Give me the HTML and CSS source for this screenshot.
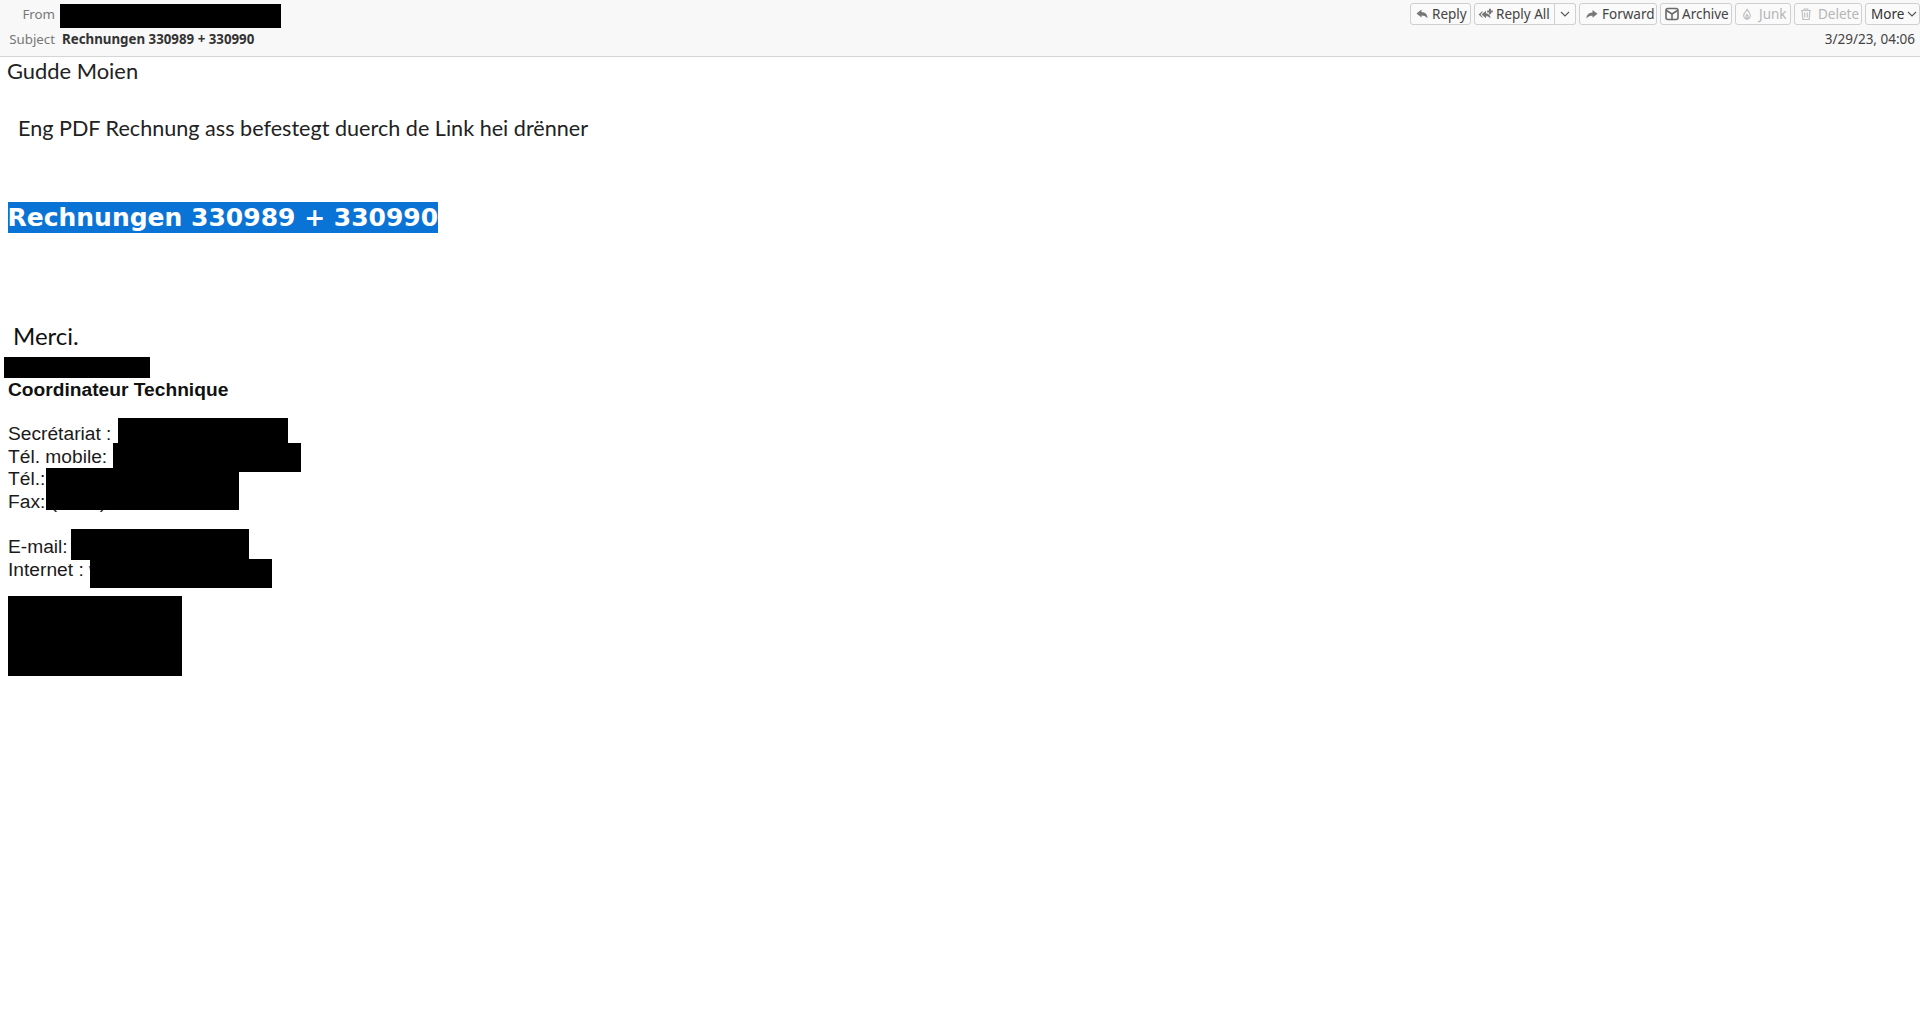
FILE: index.html
```html
<!DOCTYPE html>
<html lang="en">
<head>
<meta charset="utf-8">
<title>Rechnungen 330989 + 330990</title>
<link rel="stylesheet" href="styles.css">
</head>
<body>
<header class="head">
  <div class="head-row first">
    <div class="field"><span class="label">From</span><span class="redact from-box"></span></div>
    <div class="toolbar">
      <button class="btn reply"><svg class="ico" viewBox="0 0 12 12"><path d="M5.500 1.500.5 5.500l5 4V7.400c2.300 0 4 .6 6 2.900 0-3.800-2.200-6-6-6.200z"/></svg>Reply</button>
      <div class="split">
        <button class="btn inner replyall"><svg class="ico wide" viewBox="0 0 16 12"><path d="M4.500 3 .5 6.500l4 3.500V8.900L2.600 6.500 4.500 4.200z"/><path d="M8 2.800 3.500 6.500 8 10.300V8.200c1.800 0 3.300.5 4.500 2.300 0-3.100-1.700-4.900-4.500-5.200z"/><path d="M11 .8h2v1.700h1.800v1.900H13v1.800h-2V4.400H9.200V2.500H11z"/></svg>Reply All</button>
        <button class="btn inner caret"><svg class="chev" viewBox="0 0 10 6"><path d="M1 1l4 4 4-4"/></svg></button>
      </div>
      <button class="btn forward"><svg class="ico" viewBox="0 0 12 12"><path d="M6.500 2l5 3.800-5 3.900V7.800c-2.300 0-4 .5-6 2.700 0-3.700 2.200-5.800 6-6z"/></svg>Forward</button>
      <button class="btn archive"><svg class="ico box" viewBox="0 0 14 14"><rect class="line" x="1" y="1.500" width="12" height="11" rx="2"/><path class="line" d="M1.500 3.500 7 7l5.500-3.500M7 7v5.500"/></svg>Archive</button>
      <button class="btn junk off"><svg class="ico" viewBox="0 0 12 12"><path class="line" d="M6 .8c.3 2.200-3.300 3.700-3.300 6.800 0 2 1.500 3.600 3.300 3.600s3.300-1.600 3.300-3.600C9.300 5.600 7.800 5 7.700 3.300 6.900 3.800 6.500 2 6 .8zM6 6c.2 1-1.200 1.600-1.200 2.800 0 .8.500 1.400 1.200 1.400s1.300-.6 1.300-1.400C7.300 7.600 6.300 7.200 6 6z"/></svg>Junk</button>
      <button class="btn delete off"><svg class="ico" viewBox="0 0 12 12"><path class="line" d="M1 2.500h10M4.200 2.500V1h3.600v1.500M2.200 2.500l.6 9h6.400l.6-9M4.700 4.500v5M7.300 4.500v5"/></svg>Delete</button>
      <button class="btn more">More<svg class="chev" viewBox="0 0 10 6"><path d="M1 1l4 4 4-4"/></svg></button>
    </div>
  </div>
  <div class="head-row second">
    <div class="field"><span class="label">Subject</span><span class="subject">Rechnungen 330989 + 330990</span></div>
    <span class="date">3/29/23, 04:06</span>
  </div>
</header>
<main class="mail">
  <p class="lato greet">Gudde Moien</p>
  <p class="lato intro">Eng PDF Rechnung ass befestegt duerch de Link hei drënner</p>
  <h1 class="link-title"><span class="sel">Rechnungen 330989 + 330990</span></h1>
  <p class="lato merci">Merci.</p>
  <div class="redact name-box"></div>
  <div class="sig">
    <p class="role">Coordinateur Technique</p>
    <div class="sig-block">
      <div class="sig-line">Secrétariat :<span class="redact over r1"></span></div>
      <div class="sig-line">Tél. mobile:<span class="redact over r2"></span></div>
      <div class="sig-line">Tél.:<span class="redact over r3"></span></div>
      <div class="sig-line">Fax: (&nbsp;&nbsp;&nbsp;&nbsp;&nbsp;&nbsp;&nbsp;&nbsp;)</div>
    </div>
    <div class="sig-block second-block">
      <div class="sig-line">E-mail:<span class="redact over r4"></span></div>
      <div class="sig-line">Internet : <span class="web">www</span><span class="redact over r5"></span></div>
    </div>
    <div class="redact logo-box"></div>
  </div>
</main>
</body>
</html>
```
FILE: styles.css
```css
* { box-sizing: border-box; }
html, body { margin: 0; height: 100%; background: #fff; }
body { font-family: "Noto Sans", sans-serif; color: #222; overflow: hidden; }
p, h1 { margin: 0; }

.head { height: 57px; background: #f8f8f8; border-bottom: 1px solid #d5d5d5; padding: 3px 0 0; display: flex; flex-direction: column; }
.head-row { display: flex; justify-content: space-between; }
.head-row.first { height: 22px; align-items: flex-start; }
.head-row.second { height: 28px; padding-right: 5px; align-items: center; }
.field { display: flex; align-items: center; font-size: 13.3px; height: 22px; }
.label { width: 55px; text-align: right; color: #777; }
.from-box { width: 221px; height: 24px; margin-left: 5px; align-self: flex-start; margin-top: 1px; }
.subject { margin-left: 7px; font-weight: 700; font-size: 13.3px; color: #333; }
.date { font-size: 13.5px; color: #444; }

.toolbar { display: flex; gap: 3px; }
.btn { height: 22px; display: flex; align-items: center; padding: 0 2px 0 5px; font: 13.5px "Noto Sans", sans-serif; color: #444; background: #fafafa; border: 1px solid #d0d0d0; border-radius: 3px; white-space: nowrap; }
.reply { width: 61px; gap: 4px; }
.split { display: flex; width: 102px; }
.inner.replyall { width: 81px; border-radius: 3px 0 0 3px; padding-left: 3px; gap: 2px; }
.inner.caret { width: 21px; border-left: 0; border-radius: 0 3px 3px 0; justify-content: center; padding: 0; }
.forward { width: 78px; gap: 4px; padding-left: 6px; }
.archive { width: 72px; padding-left: 4px; gap: 3px; }
.junk { width: 56px; gap: 6px; }
.delete { width: 68px; gap: 6px; }
.more { width: 55px; justify-content: space-between; color: #333; }
.off { color: #b5b5b5; }
.ico { width: 12px; height: 12px; fill: #777; flex: none; }
.ico.wide { width: 16px; }
.ico.box { width: 14px; height: 14px; }
.ico .line { fill: none; stroke: #6a6a6a; stroke-width: 1.600; }
.off .ico .line { stroke: #c0c0c0; stroke-width: 1.200; }
.chev { width: 10px; height: 6px; fill: none; stroke: #555; stroke-width: 1.100; flex: none; }

.redact { background: #000; display: block; }
.mail { padding: 0 0 0 8px; }
.lato { font-family: Lato, sans-serif; color: #222; }
.greet { font-size: 21.900px; line-height: 30px; margin: -1px 0 0 -1px; }
.intro { font-size: 21.600px; line-height: 30px; margin: 27px 0 0 10px; }
.link-title { margin: 59px 0 0 -0.500px; font: 700 25px/31px "DejaVu Sans", sans-serif; color: #fff; }
.sel { background: #0a74d6; display: inline-block; }
.merci { font-size: 24px; line-height: 32px; margin: 87px 0 0 5px; color: #111; }
.name-box { width: 146px; height: 21px; margin: 5px 0 0 -4px; }
.sig { font: 19.200px/22.600px "Liberation Sans", sans-serif; color: #1a1a1a; }
.role { font-weight: 700; line-height: 23px; color: #111; }
.sig-block { margin-top: 22px; }
.second-block { margin-top: 22.600px; }
.sig-line { position: relative; height: 22.600px; white-space: nowrap; }
.web { color: #2a2ad0; }
.over { position: absolute; z-index: 1; }
.r1 { left: 110px; top: -5px; width: 170px; height: 25px; }
.r2 { left: 105px; top: -2.600px; width: 188px; height: 29px; }
.r3 { left: 38px; top: 0; width: 193px; height: 42px; }
.r4 { left: 63px; top: -7px; width: 178px; height: 31px; }
.r5 { left: 82px; top: 0; width: 182px; height: 29px; }
.logo-box { width: 174px; height: 80px; margin-top: 15px; }
```
